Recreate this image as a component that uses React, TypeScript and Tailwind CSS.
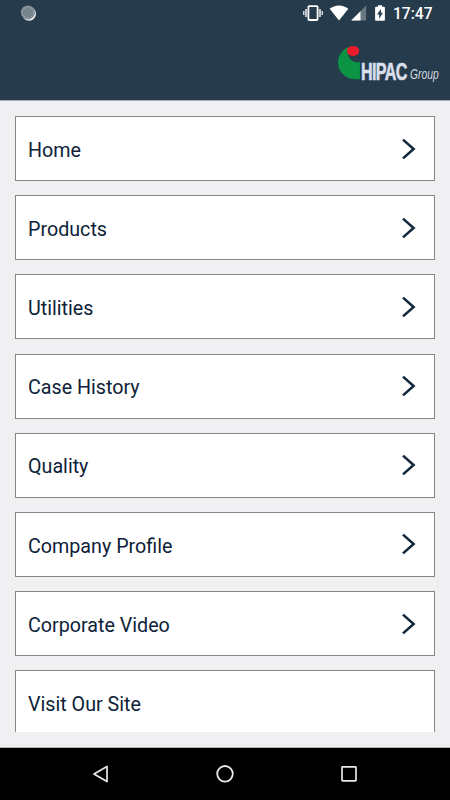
interface MenuItemProps {
    title: string;
    hasArrow?: boolean;
}

const MENU_ITEMS: MenuItemProps[] = [
    {title: 'Home', hasArrow: true},
    {title: 'Products', hasArrow: true},
    {title: 'Utilities', hasArrow: true},
    {title: 'Case History', hasArrow: true},
    {title: 'Quality', hasArrow: true},
    {title: 'Company Profile', hasArrow: true},
    {title: 'Corporate Video', hasArrow: true},
    {title: 'Visit Our Site'},
];

const SyncIcon = () => (
    <svg className="h-4 w-4" viewBox="0 0 16 16">
        <circle cx="9" cy="8.7" r="7" fill="#f1f6f6" />
        <circle cx="7.9" cy="7.5" r="7.1" fill="#75838d" />
        <circle cx="7.9" cy="7.5" r="5.8" fill="none" stroke="#a4aeb5" strokeWidth="1.4" strokeDasharray="1 1.02" />
    </svg>
);

const VibrateIcon = () => (
    <svg className="h-4 w-5" viewBox="0 0 20 16" fill="none" stroke="#fff">
        <rect x="5.4" y="1.1" width="9.2" height="13.9" rx="1" strokeWidth="1.8" />
        <path d="M3 4v8M17 4v8" strokeWidth="1.4" />
        <path d="M.8 6v4M19.2 6v4" strokeWidth="1.2" />
    </svg>
);

const WifiIcon = () => (
    <svg className="h-4 w-5" viewBox="0 0 20 16" fill="#fff">
        <path d="M10 15.4.7 3.8C3.2 1.8 6.4.5 10 .5s6.8 1.3 9.3 3.3z" />
    </svg>
);

const SignalIcon = () => (
    <svg className="h-4 w-4" viewBox="0 0 16 16">
        <path d="M15.2.6v15H.2z" fill="#687883" />
        <path d="M9.5 6.3v9.3H.2z" fill="#fff" />
    </svg>
);

const BatteryIcon = () => (
    <svg className="h-4 w-2.5" viewBox="0 0 10 16">
        <path d="M3 .2h4v1.6h2.1c.5 0 .8.3.8.8v12.3c0 .5-.3.8-.8.8H.9c-.5 0-.8-.3-.8-.8V2.6c0-.5.3-.8.8-.8H3z" fill="#fff" />
        <path d="M5.9 4.1v3.7h2l-3.7 5.9V9.5H2z" fill="#263b4b" />
    </svg>
);

const Logo = () => (
    <svg className="h-10 w-[104px] overflow-visible" viewBox="0 0 104 40">
        <path d="M13.8 1.4C5.6 3.4 1 9.9 1 17.6c0 9.2 7.6 16.7 17 16.7h4.9V16.8c-2.8 1-5.8.6-8.1-1.3C11 12.5 9.6 6.8 13.8 1.4z" fill="#0a9444" />
        <ellipse cx="16.1" cy="6" rx="6.2" ry="5" fill="#ed1c2b" />
        <text transform="translate(24 34.6) scale(.67 1)" fill="#d9dfeb" stroke="#d9dfeb" strokeWidth=".7" className="font-['Liberation_Sans',sans-serif] text-[24px] font-bold tracking-[-0.9px]">HIPAC</text>
        <text transform="translate(73 34.4) scale(.74 1)" fill="#d0d7df" className="font-['Liberation_Sans',sans-serif] text-[14px] italic">Group</text>
    </svg>
);

const Header = () => (
    <header className="h-[101px] shrink-0 border-b border-[#a9afba] bg-[#263b4b]">
        <div className="flex h-7 items-start pt-[5px] pr-[17px] pl-5">
            <SyncIcon />
            <div className="ml-auto flex items-start">
                <VibrateIcon />
                <div className="ml-[6px]"><WifiIcon /></div>
                <div className="ml-[2px]"><SignalIcon /></div>
                <div className="ml-[8px]"><BatteryIcon /></div>
                <span className="ml-[8px] w-[40px] text-[15.6px] leading-[18px] font-medium whitespace-nowrap text-white">17:47</span>
            </div>
        </div>
        <div className="flex justify-end pt-[17px] pr-[9px]">
            <Logo />
        </div>
    </header>
);

const MenuItem = ({title, hasArrow}: MenuItemProps) => (
    <button className="flex h-[65px] w-full shrink-0 items-center justify-between border border-[#858585] bg-white pr-[17px] pl-3 text-left">
        <span className="pt-[4.4px] text-[19.7px] leading-6 text-[#0d2238]">{title}</span>
        {hasArrow && (
            <svg className="h-6 w-4" viewBox="0 0 16 24" fill="none" stroke="#14293d" strokeWidth="2.6">
                <path d="M2 2.6 12.6 12 2 21.4" />
            </svg>
        )}
    </button>
);

const NavigationBar = () => (
    <nav className="flex h-[53px] shrink-0 items-center justify-center gap-[104px] border-t border-[#b0b0b2] bg-black">
        <svg className="h-5 w-5" viewBox="0 0 20 20" fill="none" stroke="#e8e8e8" strokeWidth="1.7">
            <path d="M3 10 16 2.4v15.2z" strokeLinejoin="round" />
        </svg>
        <svg className="h-5 w-5" viewBox="0 0 20 20" fill="none" stroke="#e8e8e8" strokeWidth="1.8">
            <circle cx="10" cy="9.8" r="7.8" />
        </svg>
        <svg className="h-5 w-5" viewBox="0 0 20 20" fill="none" stroke="#e8e8e8" strokeWidth="1.7">
            <rect x="3" y="2.8" width="14" height="14" rx=".6" />
        </svg>
    </nav>
);

const App = () => {
    return (
        <div className="flex h-[800px] w-[450px] flex-col overflow-hidden bg-[#f0f0f3] font-[Roboto,sans-serif]">
            <Header />
            <main className="mx-[15px] mt-[15.1px] mb-[15px] flex min-h-0 flex-1 flex-col gap-[14.17px] overflow-hidden">
                {MENU_ITEMS.map((item) => (
                    <MenuItem key={item.title} {...item} />
                ))}
            </main>
            <NavigationBar />
        </div>
    );
};

export default App;
